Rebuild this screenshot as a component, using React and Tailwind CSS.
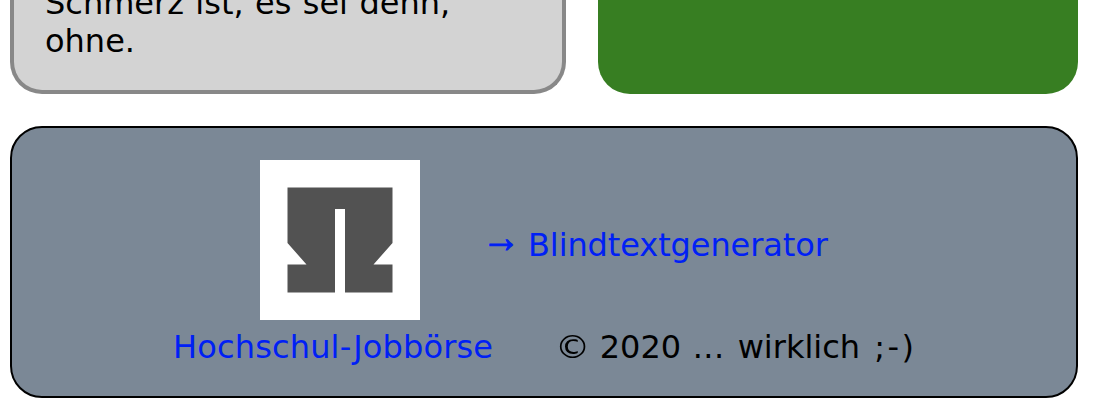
export default function App() {
  return (
    <div className="h-[408px] w-[1094px] overflow-hidden bg-white pl-[10px] font-['DejaVu_Sans',sans-serif] text-[32px] leading-[39px] text-black">
      <div className="flex h-[94px] gap-8">
        <div className="flex w-[556px] flex-col justify-end rounded-b-[32px] border-4 border-t-0 border-[#888888] bg-[#d3d3d3] pb-[30px] pl-[31px] leading-[38px]">
          <p className="whitespace-nowrap [word-spacing:1.2px]">Schmerz ist, es sei denn,</p>
          <p className="whitespace-nowrap">ohne.</p>
        </div>
        <div className="w-[480px] rounded-b-[32px] bg-[#377e22]" />
      </div>
      <footer className="mt-8 h-[272px] w-[1068px] rounded-[32px] border-2 border-black bg-[#7b8896] pt-8">
        <div className="flex h-[160px] items-center pl-[248px]">
          <svg className="h-[160px] w-[160px] bg-white" viewBox="0 0 160 160">
            <path className="blur-[0.7px]" fill="#525252" d="M27.5 27.5H132.5V83L113.5 104.5H132.5V132.5H85V49H75V132.5H27.5V104.5H46.5L27.5 83Z" />
          </svg>
          <a className="ml-[65px] flex whitespace-nowrap pt-[10px] text-[#0020f5]">
            <span className="w-[32px] -translate-y-[8px] scale-x-[1.2] scale-y-[1.35] font-['Liberation_Sans',sans-serif] [-webkit-text-stroke:0.8px_#0020f5]">→</span>
            <span className="ml-[11px] tracking-[-0.1px]">Blindtextgenerator</span>
          </a>
        </div>
        <div className="flex pl-[161px] pt-[8px]">
          <a className="w-[320px] whitespace-nowrap tracking-[0.16px] text-[#0020f5]">Hochschul-Jobbörse</a>
          <p className="ml-[62px] whitespace-nowrap">
            <span className="mr-[1px] inline-block origin-left scale-x-110">©</span>
            <span className="[word-spacing:1.5px]"> 2020 </span>
            <span className="tracking-[0.4px]">...</span>
            <span className="ml-[3px]"> wirklich </span>
            <span className="ml-[4px] tracking-[2.4px]">;-)</span>
          </p>
        </div>
      </footer>
    </div>
  );
}
